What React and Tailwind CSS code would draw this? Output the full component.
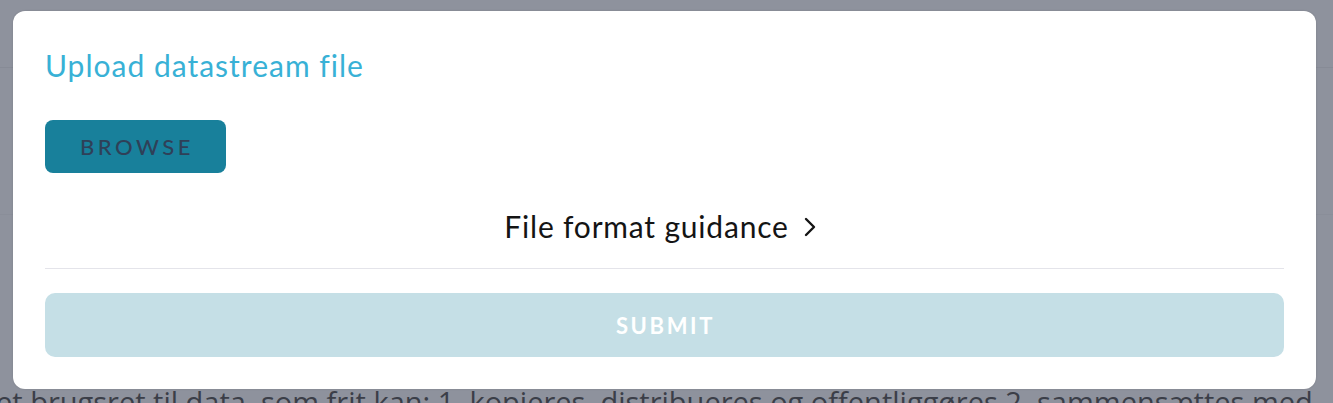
import React from "react";

export default function App() {
  return (
    <div className="relative h-[403px] w-full overflow-hidden bg-[#8e929d]" style={{ fontFamily: "Lato, 'Noto Sans', sans-serif" }}>
      {/* underlying page (dimmed) */}
      <div className="flex h-full flex-col">
        <div className="h-[68px] border-b border-[#878b96]" />
        <div className="h-[147px] border-b border-[#8a8e99]" />
        <div className="flex-1" />
        <div className="h-[16px] overflow-hidden whitespace-nowrap text-[29px] leading-[29px] text-[#3b3e48]" style={{ fontFamily: "'Open Sans', sans-serif" }}>
          <span className="-ml-[4px] block">et brugsret til data, som frit kan: 1. kopieres, distribueres og offentliggøres 2. sammensættes med</span>
        </div>
      </div>

      {/* modal */}
      <div className="absolute left-[13px] top-[11px] flex h-[378px] w-[1303px] flex-col rounded-[12px] bg-white px-[32px] pt-[36px] shadow-[0_0_2px_rgba(0,0,0,0.15)]">
        <h2 className="text-[30px] leading-[36px] font-normal tracking-[1px] text-[#38b1d6]">Upload datastream file</h2>
        <div className="mt-[37px]">
          <button className="flex h-[53px] w-[181px] items-center justify-center rounded-[8px] bg-[#18809b] pl-[3px] text-[22px] font-medium tracking-[0.16em] text-[#2f4058]">
            BROWSE
          </button>
        </div>
        <div className="mt-[35px] flex h-[36px] items-center justify-center gap-[14px] pr-[8px] text-[30px] leading-[36px] tracking-[0.8px] text-[#141414]">
          <span>File format guidance</span>
          <svg width="14" height="22" viewBox="0 0 14 22" fill="none" className="mt-[1px]">
            <path d="M3 3 L11 11 L3 19" stroke="#141414" strokeWidth="2.4" strokeLinecap="round" strokeLinejoin="round" />
          </svg>
        </div>
        <div className="mt-[24px] h-[1px] w-[1239px] bg-[#e4e4ea]" />
        <button className="mt-[24px] flex h-[64px] w-[1239px] items-center justify-center rounded-[10px] bg-[#c5dfe6] pl-[2px] text-[22px] font-bold tracking-[0.12em] text-white">
          SUBMIT
        </button>
      </div>
    </div>
  );
}
